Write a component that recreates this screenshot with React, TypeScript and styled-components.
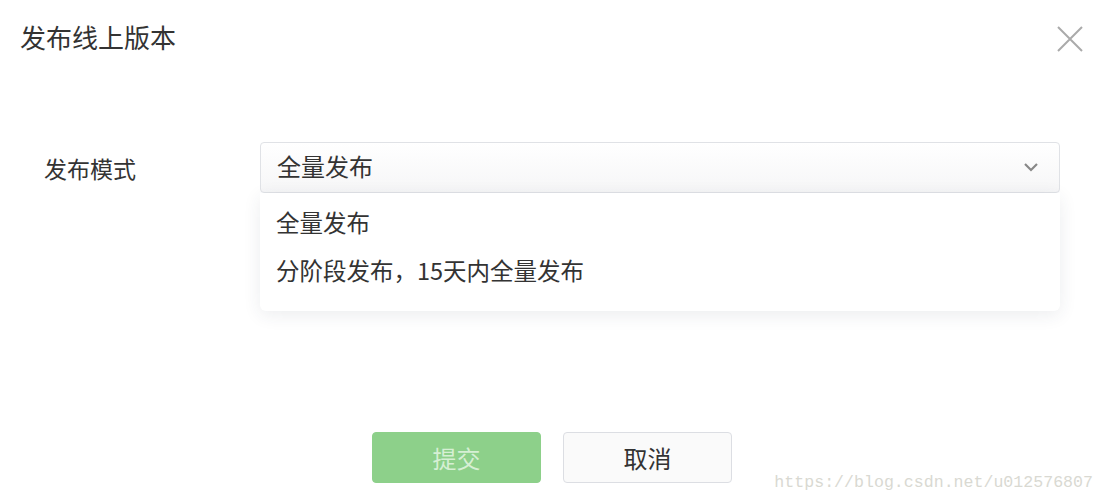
import React from "react";
import styled, { createGlobalStyle } from "styled-components";

const Global = createGlobalStyle`
  html, body { margin: 0; padding: 0; background: #fff; }
  body { font-family: "Noto Sans CJK SC", "Noto Sans", sans-serif; color: #333; }
  * { box-sizing: border-box; }
`;

const Page = styled.div`
  position: relative;
  width: 1104px;
  height: 502px;
  background: #fff;
  display: flex;
  flex-direction: column;
  overflow: hidden;
`;

const Header = styled.div`
  height: 74px;
  padding: 0 20px 0 20px;
  display: flex;
  align-items: center;
  justify-content: space-between;
`;

const Title = styled.h1`
  margin: 0;
  font-size: 26px;
  font-weight: 400;
  line-height: 1;
  color: #333;
`;

const CloseButton = styled.button`
  width: 28px;
  height: 28px;
  padding: 0;
  border: none;
  background: none;
  margin-top: 4px;
  display: flex;
  align-items: center;
  justify-content: center;
  cursor: pointer;
`;

const Body = styled.div`
  padding-top: 68px;
  padding-left: 44px;
  flex: 1;
  display: flex;
  flex-direction: column;
`;

const FormRow = styled.div`
  display: flex;
  align-items: center;
  height: 51px;
`;

const Label = styled.div`
  width: 216px;
  font-size: 23px;
  color: #333;
  padding-top: 1px;
`;

const SelectWrap = styled.div`
  position: relative;
  width: 800px;
`;

const SelectBox = styled.div`
  height: 51px;
  border: 1px solid #e0e2e6;
  border-radius: 4px;
  background: linear-gradient(#ffffff, #f6f6f7);
  display: flex;
  align-items: center;
  justify-content: space-between;
  padding: 0 20px 4px 16px;
  font-size: 24px;
  color: #333;
`;

const Chevron = styled.svg`
  margin-top: 2px;
`;

const Menu = styled.ul`
  position: absolute;
  top: 51px;
  left: 0;
  right: 0;
  margin: 0;
  padding: 5px 0 17px;
  list-style: none;
  background: #fff;
  border-radius: 0 0 6px 6px;
  box-shadow: 0 4px 18px rgba(40, 50, 80, 0.09);
`;

const MenuItem = styled.li`
  height: 48px;
  display: flex;
  align-items: center;
  padding-left: 16px;
  font-size: 23.5px;
  color: #333;
`;

const Footer = styled.div`
  display: flex;
  justify-content: center;
  gap: 22px;
  margin-top: 239px;
  margin-left: -44px;
`;

const Button = styled.button<{ $primary?: boolean }>`
  width: 169px;
  height: 51px;
  border-radius: 4px;
  font-family: inherit;
  font-size: 24px;
  padding: 0;
  cursor: pointer;
  border: 1px solid ${(p) => (p.$primary ? "#8dd08a" : "#dcdee3")};
  background: ${(p) => (p.$primary ? "#8dd08a" : "#fafafa")};
  color: ${(p) => (p.$primary ? "#d6efd4" : "#333")};
`;

const Watermark = styled.div`
  position: absolute;
  right: 11px;
  bottom: 10px;
  font-family: "Liberation Mono", monospace;
  font-size: 16.6px;
  color: #d9d9d2;
  letter-spacing: 0;
`;

export default function App() {
  return (
    <Page>
      <Global />
      <Header>
        <Title>发布线上版本</Title>
        <CloseButton aria-label="关闭">
          <svg width="26" height="26" viewBox="0 0 26 26">
            <path d="M1 1 L25 25 M25 1 L1 25" stroke="#aaaaaa" strokeWidth="2" fill="none" />
          </svg>
        </CloseButton>
      </Header>
      <Body>
        <FormRow>
          <Label>发布模式</Label>
          <SelectWrap>
            <SelectBox>
              <span>全量发布</span>
              <Chevron width="16" height="10" viewBox="0 0 16 10">
                <path d="M2 2 L8 8 L14 2" stroke="#888888" strokeWidth="2.2" fill="none" />
              </Chevron>
            </SelectBox>
            <Menu>
              <MenuItem>全量发布</MenuItem>
              <MenuItem>分阶段发布，15天内全量发布</MenuItem>
            </Menu>
          </SelectWrap>
        </FormRow>
        <Footer>
          <Button $primary>提交</Button>
          <Button>取消</Button>
        </Footer>
      </Body>
      <Watermark>https://blog.csdn.net/u012576807</Watermark>
    </Page>
  );
}
